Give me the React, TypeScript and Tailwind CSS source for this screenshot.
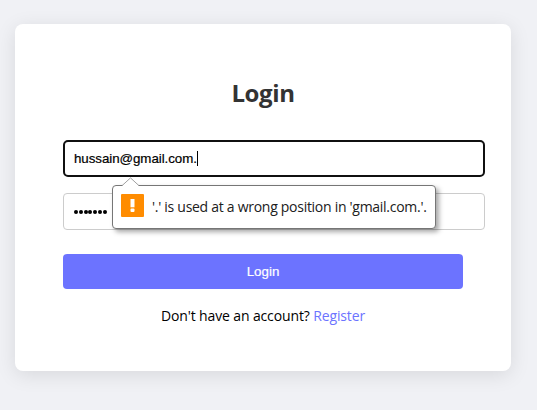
import React from "react";

function ValidationBubble() {
  return (
    <div className="absolute left-[49px] top-[45px] flex h-[44px] w-[324px] items-center rounded-[4px] border border-[#767676] bg-white pl-2 shadow-[3px_3px_5px_rgba(0,0,0,0.35)]">
      <svg className="absolute -top-[9px] left-[8px]" width="19" height="10" viewBox="0 0 19 10" fill="none">
        <path d="M1 10V9L9.5 1L18 9V10Z" fill="#fff" />
        <path d="M1 8.7L9.5 0.9L18 8.7" stroke="#a0a0a0" />
      </svg>
      <svg className="mb-[3px] shrink-0" width="23" height="23" viewBox="0 0 23 23">
        <rect width="23" height="23" rx="1" fill="#ff8c00" />
        <path d="M9.5 5H13.5V13.3H9.5Z" fill="#fff" />
        <rect x="9.5" y="14.6" width="4" height="3.4" rx="1" fill="#fff" />
      </svg>
      <span className="ml-2 whitespace-nowrap font-['Open_Sans',sans-serif] text-[14px] leading-5 tracking-[-0.28px] text-[#202020]">
        '.' is used at a wrong position in 'gmail.com.'.
      </span>
    </div>
  );
}

export default function App() {
  return (
    <main className="h-[410px] overflow-hidden bg-[#f0f1f5] px-[15px] pt-6 font-['Open_Sans',sans-serif]">
      <section className="flex h-[347px] w-[496px] flex-col rounded-lg bg-white px-12 shadow-[0_4px_20px_rgba(0,0,0,0.1)]">
        <h1 className="mt-[53px] h-8 w-[400px] text-center text-2xl leading-8 font-bold tracking-[-0.4px] text-[#333]">
          Login
        </h1>
        <form className="relative mt-[31px] flex flex-col">
          <div className="flex h-[37px] w-[422px] items-center rounded-[5px] border-2 border-[#101010] px-[9px] font-['Liberation_Sans',sans-serif] text-[13.333px] tracking-[-0.06px] text-black [-webkit-text-stroke:0.2px_black]">
            <span>hussain@gmail.com.</span>
            <span className="h-[15px] w-px bg-black" />
          </div>
          <div className="mt-4 flex h-[37px] w-[422px] items-center gap-[0.8px] rounded-[4px] border border-[#ccc] px-[10px]">
            {Array.from({ length: 7 }, (_, i) => (
              <span key={i} className="size-[4px] rounded-full bg-black" />
            ))}
          </div>
          <ValidationBubble />
          <button
            type="button"
            className="mt-6 h-[35px] w-[400px] rounded-[4px] bg-[#6c73ff] font-['Liberation_Sans',sans-serif] text-[13.333px] text-white [-webkit-text-stroke:0.2px_white]"
          >
            Login
          </button>
        </form>
        <p className="mt-[17px] w-[400px] text-center text-[14px] leading-5 tracking-[-0.13px] whitespace-nowrap text-black">
          Don't have an account? <a className="text-[#6c73ff]">Register</a>
        </p>
      </section>
    </main>
  );
}
